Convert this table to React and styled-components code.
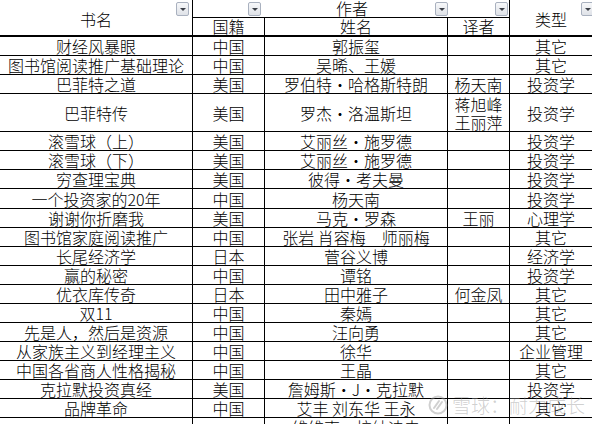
import React from 'react';
import styled, { createGlobalStyle } from 'styled-components';

const GlobalStyle = createGlobalStyle`
  html, body {
    margin: 0;
    padding: 0;
    background: #ffffff;
  }
  body {
    width: 592px;
    height: 424px;
    overflow: hidden;
    font-family: "Noto Sans CJK SC", "Noto Sans", sans-serif;
    font-weight: 300;
    color: #000;
  }
`;

const COLS = '193px 72px 183px 62px 82px';

const Sheet = styled.div`
  position: relative;
  width: 592px;
  height: 424px;
  overflow: hidden;
  font-size: 16px;
`;

const Header = styled.div`
  position: relative;
  display: grid;
  grid-template-columns: ${COLS};
  grid-template-rows: 18px 17px;
  border-bottom: 2px solid #000;
`;

const HeadCell = styled.div`
  box-sizing: border-box;
  grid-column: ${p => p.$col};
  grid-row: ${p => p.$row};
  display: flex;
  align-items: ${p => p.$align || 'center'};
  justify-content: center;
  border-right: ${p => (p.$last ? 'none' : '1px solid #000')};
  border-bottom: ${p => (p.$line ? '1px solid #000' : 'none')};
  line-height: 17px;
  padding-left: ${p => p.$shift || 0}px;
  padding-top: ${p => p.$top || 0}px;
`;

const FilterRow = styled.div`
  position: absolute;
  left: 0;
  top: 2px;
  display: grid;
  grid-template-columns: 189px 72px 187px 60px 86px;
  width: 600px;
`;

const FilterSlot = styled.div`
  display: flex;
  justify-content: flex-end;
`;

const FilterButton = styled.div`
  box-sizing: border-box;
  width: 13px;
  height: 14px;
  border: 1px solid #a9b1bf;
  border-radius: 2px;
  background: linear-gradient(#f7f8fa, #dfe2e8);
  display: flex;
  align-items: center;
  justify-content: center;

  &::after {
    content: '';
    width: 0;
    height: 0;
    border-left: 3px solid transparent;
    border-right: 3px solid transparent;
    border-top: 3px solid #3b3f47;
  }
`;

const Row = styled.div`
  display: grid;
  grid-template-columns: ${COLS};
  height: ${p => p.$h || 19}px;
`;

const Cell = styled.div`
  box-sizing: border-box;
  display: flex;
  flex-direction: column;
  align-items: center;
  justify-content: ${p => (p.$h > 20 ? 'center' : 'flex-end')};
  border-right: ${p => (p.$last ? 'none' : '1px solid #000')};
  border-bottom: 1px solid #000;
  line-height: 18px;
  white-space: nowrap;
  text-align: center;
`;

const Line = styled.span`
  display: block;
  line-height: 18px;
`;

const Watermark = styled.div`
  position: absolute;
  left: 428px;
  top: 394px;
  display: flex;
  align-items: center;
  gap: 4px;
  font-size: 19px;
  line-height: 22px;
  color: rgba(150, 150, 150, 0.45);
  pointer-events: none;
`;

const rows = [
  ['财经风暴眼', '中国', '郭振玺', '', '其它'],
  ['图书馆阅读推广基础理论', '中国', '吴晞、王媛', '', '其它'],
  ['巴菲特之道', '美国', '罗伯特・哈格斯特朗', '杨天南', '投资学'],
  ['巴菲特传', '美国', '罗杰・洛温斯坦', ['蒋旭峰', '王丽萍'], '投资学', 38],
  ['滚雪球（上）', '美国', '艾丽丝・施罗德', '', '投资学'],
  ['滚雪球（下）', '美国', '艾丽丝・施罗德', '', '投资学'],
  ['穷查理宝典', '美国', '彼得・考夫曼', '', '投资学'],
  ['一个投资家的20年', '中国', '杨天南', '', '投资学', 20],
  ['谢谢你折磨我', '美国', '马克・罗森', '王丽', '心理学'],
  ['图书馆家庭阅读推广', '中国', '张岩 肖容梅　师丽梅', '', '其它'],
  ['长尾经济学', '日本', '菅谷义博', '', '经济学'],
  ['赢的秘密', '中国', '谭铭', '', '投资学'],
  ['优衣库传奇', '日本', '田中雅子', '何金凤', '其它'],
  ['双11', '中国', '秦嫣', '', '其它'],
  ['先是人，然后是资源', '中国', '汪向勇', '', '其它'],
  ['从家族主义到经理主义', '中国', '徐华', '', '企业管理'],
  ['中国各省商人性格揭秘', '中国', '王晶', '', '其它'],
  ['克拉默投资真经', '美国', '詹姆斯・J・克拉默', '', '投资学'],
  ['品牌革命', '中国', '艾丰 刘东华 王永', '', '其它'],
  ['', '', '维维克・拉纳迪夫', '', '', 19],
];

const XueqiuLogo = () => (
  <svg width="20" height="20" viewBox="0 0 20 20">
    <circle cx="10" cy="10" r="8.5" fill="none" stroke="currentColor" strokeWidth="2" />
    <path d="M6 13 L11 6 M9 14 L14 7" stroke="currentColor" strokeWidth="2" strokeLinecap="round" fill="none" />
  </svg>
);

const App = () => (
  <>
    <GlobalStyle />
    <Sheet>
      <Header>
        <HeadCell $col="1" $row="1 / 3" $top={4}>书名</HeadCell>
        <HeadCell $col="2 / 5" $row="1" $line $shift={2}>作者</HeadCell>
        <HeadCell $col="2" $row="2" $align="flex-end">国籍</HeadCell>
        <HeadCell $col="3" $row="2" $align="flex-end">姓名</HeadCell>
        <HeadCell $col="4" $row="2" $align="flex-end">译者</HeadCell>
        <HeadCell $col="5" $row="1 / 3" $last $top={4}>类型</HeadCell>
        <FilterRow>
          <FilterSlot><FilterButton /></FilterSlot>
          <FilterSlot><FilterButton /></FilterSlot>
          <FilterSlot><FilterButton /></FilterSlot>
          <FilterSlot><FilterButton /></FilterSlot>
          <FilterSlot><FilterButton /></FilterSlot>
        </FilterRow>
      </Header>
      {rows.map((r, i) => {
        const h = r[5] || 19;
        return (
          <Row key={i} $h={h}>
            {r.slice(0, 5).map((v, j) => (
              <Cell key={j} $h={h} $last={j === 4}>
                {Array.isArray(v) ? v.map(t => <Line key={t}>{t}</Line>) : v}
              </Cell>
            ))}
          </Row>
        );
      })}
      <Watermark>
        <XueqiuLogo />
        <span>雪球：耐力成长</span>
      </Watermark>
    </Sheet>
  </>
);

export default App;
